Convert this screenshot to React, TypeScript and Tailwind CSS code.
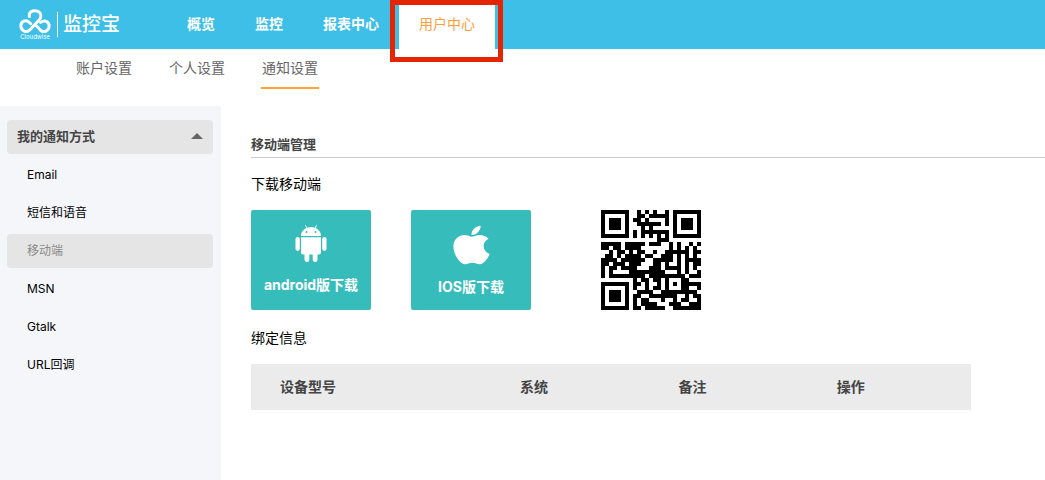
import { FaApple } from "react-icons/fa";

const nav = ["概览", "监控", "报表中心", "用户中心"];
const subnav = ["账户设置", "个人设置", "通知设置"];
const channels = ["Email", "短信和语音", "移动端", "MSN", "Gtalk", "URL回调"];
const columns = ["设备型号", "系统", "备注", "操作"];

const qrRows = [
  "1111111001010100101111111",
  "1000001001101111101000001",
  "1011101011010000101011101",
  "1011101001111110101011101",
  "1011101000101000001011101",
  "1000001010111111101000001",
  "1111111010101010101111111",
  "0000000000000011100000000",
  "1111101111101110010100101",
  "1101101111000000010101010",
  "0010110101100100111111011",
  "0110101111011001110101010",
  "1111011111100111110101111",
  "1101110111000110100101011",
  "1011011110001110111101010",
  "1010000111111111000101001",
  "1011111111101111111110111",
  "0000000010110110100011000",
  "1111111011010010101011111",
  "1000001010010110100011001",
  "1011101001111001111111110",
  "1011101011001111111001011",
  "1011101010110001001011001",
  "1000001010111100011100111",
  "1111111011011111001111111",
];

function Logo() {
  return (
    <a href="#" aria-label="监控宝" className="flex h-full w-[167px] shrink-0 items-center pl-[19px] text-white">
      <span className="flex w-8 flex-col items-center">
        <svg viewBox="0 0 96 76" className="h-[25px] w-8" fill="none" stroke="currentColor" strokeWidth="9" strokeLinecap="round" aria-hidden="true">
          <path d="M31 23C29 8 40 5 48 5C58 5 66 12 66 21C66 29 61 33 56 38L33 63C22 74 5 67 5 52C5 37 20 31 31 41L35 45" />
          <path d="M53 52L64 64C75 74 91 66 91 52C91 38 76 31 65 41" />
        </svg>
        <span className="text-[6px] leading-[6px]">Cloudwise</span>
      </span>
      <span className="ml-[6px] h-[25px] w-px bg-white" />
      <span className="ml-[5px] text-[19px] leading-6 font-medium">监控宝</span>
    </a>
  );
}

function Android() {
  return (
    <svg viewBox="0 0 32 38" className="h-[38px] w-8" fill="currentColor" aria-hidden="true">
      <path d="M6 11C6 7 8.500 4.500 11.500 3L10 .5L10.600 .1L12.300 2.700C14.600 1.900 17.400 1.900 19.700 2.700L21.400 .1L22 .5L20.500 3C23.500 4.500 26 7 26 11Z" />
      <circle cx="11.500" cy="7" r="1" className="fill-[#36bdbb]" />
      <circle cx="20.500" cy="7" r="1" className="fill-[#36bdbb]" />
      <path d="M6 12.200H26V27.500Q26 29.500 24 29.500H22.500V34.500Q22.500 37 20 37T17.700 34.500V29.500H14.300V34.500Q14.300 37 12 37T9.500 34.500V29.500H8Q6 29.500 6 27.500Z" />
      <rect x=".5" y="12" width="4.300" height="14" rx="2.150" />
      <rect x="27.200" y="12" width="4.300" height="14" rx="2.150" />
    </svg>
  );
}

function QrCode() {
  return (
    <svg viewBox="0 0 25 25" className="ml-[30px] size-[100px]" shapeRendering="crispEdges" role="img" aria-label="二维码">
      {qrRows.map((row, y) =>
        [...row].map((cell, x) => (cell === "1" ? <rect key={`${x}-${y}`} x={x} y={y} width="1" height="1" /> : null)),
      )}
    </svg>
  );
}

export default function App() {
  return (
    <div className="flex min-h-screen flex-col bg-white font-[Inter,'Noto_Sans_CJK_SC',sans-serif] text-sm text-black">
      <header className="flex h-[49px] bg-[#3dbfe8]">
        <Logo />
        <nav className="flex">
          {nav.map((item) =>
            item === "用户中心" ? (
              <a key={item} href="#" className="relative flex items-center bg-white px-5 pb-[2px] text-[#ff9e3d]">
                {item}
                <span className="pointer-events-none absolute top-0 -right-2 -left-[9px] h-[62px] border-5 border-[#e42500]" />
              </a>
            ) : (
              <a key={item} href="#" className="flex items-center px-5 pb-[2px] font-bold text-white">
                {item}
              </a>
            ),
          )}
        </nav>
      </header>
      <nav className="flex h-[57px] items-start gap-[35px] pl-[75px] text-[#666]">
        {subnav.map((item) => (
          <a
            key={item}
            href="#"
            className={`h-10 border-b-2 px-px pt-[9px] leading-5 ${item === "通知设置" ? "border-[#ffa338]" : "border-transparent"}`}
          >
            {item}
          </a>
        ))}
      </nav>
      <div className="flex flex-1">
        <aside className="w-[221px] shrink-0 bg-[#f4f6fa] pt-[14px] pr-2 pl-[7px]">
          <button type="button" className="flex h-[34px] w-full items-center justify-between rounded-sm bg-[#e5e5e5] px-[10px] pb-[2px] text-[13px] font-bold text-[#444]">
            我的通知方式
            <svg viewBox="0 0 12 6" className="h-[6px] w-3 fill-[#666]" aria-hidden="true">
              <path d="M6 0L12 6H0Z" />
            </svg>
          </button>
          <ul className="mt-1 flex flex-col gap-1 text-xs">
            {channels.map((item) => (
              <li key={item}>
                <a
                  href="#"
                  className={`flex h-[34px] items-center rounded-sm pl-5 ${item === "移动端" ? "bg-[#e5e5e5] text-[#888]" : ""}`}
                >
                  {item}
                </a>
              </li>
            ))}
          </ul>
        </aside>
        <main className="min-w-0 flex-1 pl-[30px]">
          <h1 className="border-b border-[#ccc] pt-7 pb-[3px] text-[13px] leading-5 font-bold text-[#444]">移动端管理</h1>
          <h2 className="mt-4 leading-5">下载移动端</h2>
          <div className="mt-4 flex gap-10">
            <a href="#" className="flex h-[100px] w-[120px] flex-col items-center rounded-xs bg-[#36bdbb] pt-[15px] font-bold text-white">
              <Android />
              <span className="mt-3 leading-5">android版下载</span>
            </a>
            <a href="#" className="flex h-[100px] w-[120px] flex-col items-center rounded-xs bg-[#36bdbb] pt-[13px] font-bold text-white">
              <FaApple className="h-11 w-[37px]" preserveAspectRatio="none" aria-hidden="true" />
              <span className="mt-[10px] leading-5">IOS版下载</span>
            </a>
            <QrCode />
          </div>
          <h2 className="mt-[18px] leading-5">绑定信息</h2>
          <table className="mt-4 w-full max-w-[720px] table-fixed bg-[#ebebeb] text-left text-[#444]">
            <colgroup>
              <col className="w-1/3" />
              <col className="w-[22%]" />
              <col className="w-[22%]" />
              <col />
            </colgroup>
            <thead>
              <tr className="h-[46px]">
                {columns.map((name) => (
                  <th key={name} scope="col" className="pl-[29px] font-bold">
                    {name}
                  </th>
                ))}
              </tr>
            </thead>
          </table>
        </main>
      </div>
    </div>
  );
}
